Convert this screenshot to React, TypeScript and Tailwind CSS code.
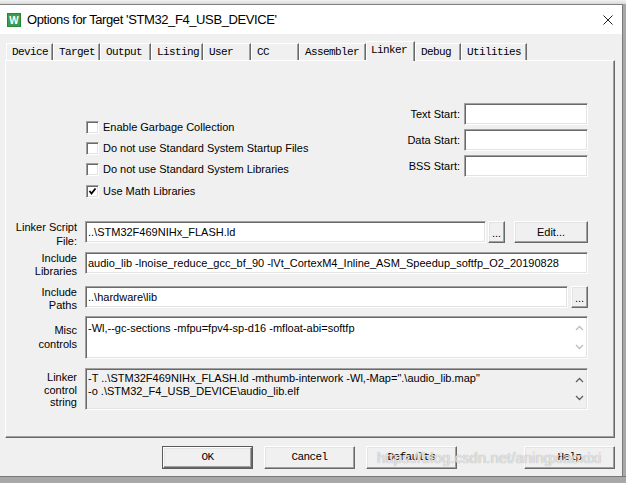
import React from "react";

const raised =
  "bg-[#f0f0f0] border border-t-white border-l-white border-r-[#696969] border-b-[#696969] shadow-[inset_-1px_-1px_0_#a0a0a0,inset_1px_1px_0_#e3e3e3]";
const sunken =
  "border border-t-[#a0a0a0] border-l-[#a0a0a0] border-r-white border-b-white shadow-[inset_1px_1px_0_#696969,inset_-1px_-1px_0_#e3e3e3]";

const tabs = [
  { label: "Device", w: "w-[47px]" },
  { label: "Target", w: "w-[47px]" },
  { label: "Output", w: "w-[51px]" },
  { label: "Listing", w: "w-[52px]" },
  { label: "User", w: "w-[48px]" },
  { label: "CC", w: "w-[48px]" },
  { label: "Assembler", w: "w-[67px]" },
  { label: "Linker", w: "w-[49px]", active: true },
  { label: "Debug", w: "w-[46px]" },
  { label: "Utilities", w: "w-[66px]" },
];

function Chevron({ up, color }: { up?: boolean; color: string }) {
  return (
    <svg width="9" height="6" viewBox="0 0 9 6">
      <polyline
        points={up ? "1,5 4.5,1.5 8,5" : "1,1 4.5,4.5 8,1"}
        fill="none"
        stroke={color}
        strokeWidth="1.3"
      />
    </svg>
  );
}

function CheckRow({ label, checked }: { label: string; checked?: boolean }) {
  return (
    <div className="flex h-[21px] items-center gap-[4px]">
      <div className={`h-[13px] w-[13px] bg-white ${sunken} flex items-center justify-center`}>
        {checked && (
          <svg width="9" height="9" viewBox="0 0 9 9">
            <polyline points="1.5,4 3.5,6.5 7.5,1.5" fill="none" stroke="#000" strokeWidth="1.8" />
          </svg>
        )}
      </div>
      <span>{label}</span>
    </div>
  );
}

function Field({ label }: { label: string }) {
  return (
    <div className="flex h-[22px] items-center gap-[4px]">
      <span className="text-right">{label}</span>
      <div className={`h-[22px] w-[124px] bg-white ${sunken}`} />
    </div>
  );
}

function Label({ children, className = "" }: { children: React.ReactNode; className?: string }) {
  return <div className={`w-[71px] shrink-0 text-right ${className}`}>{children}</div>;
}

export default function App() {
  return (
    <div className="relative flex h-[483px] w-[626px] flex-col overflow-hidden bg-[#f0f0f0] font-['Liberation_Sans',Arial,sans-serif] text-[11px] text-black">
      <div className="h-[4px] bg-gradient-to-b from-[#f2f2f2] to-[#d9d9d9]" />
      <div className="flex flex-1">
        <div className="flex flex-1 flex-col">
          {/* title bar */}
          <div className="flex h-[30px] items-center border-t border-[#808080] bg-white">
            <svg width="14" height="14" viewBox="0 0 14 14" className="ml-[7px]">
              <rect width="14" height="14" fill="#23863a" />
              <rect x="1" y="1" width="12" height="12" fill="#3a9c4c" />
              <text x="7" y="10.5" textAnchor="middle" fontSize="10" fontWeight="bold" fill="#fff" fontFamily="Liberation Sans">
                W
              </text>
            </svg>
            <span className="ml-[6px] text-[13px] tracking-[-0.4px] text-black">
              Options for Target 'STM32_F4_USB_DEVICE'
            </span>
            <svg width="10" height="10" viewBox="0 0 10 10" className="ml-auto mr-[9px]">
              <path d="M0.5 0.5 L9.5 9.5 M9.5 0.5 L0.5 9.5" stroke="#222" strokeWidth="1" />
            </svg>
          </div>

          {/* body */}
          <div className="flex flex-1 flex-col pl-[5px] pt-[7px]">
            {/* tabs */}
            <div className="flex h-[19px] items-end pl-[1px] font-['Liberation_Mono',monospace] text-[11px] tracking-[-0.6px]">
              {tabs.map((t) =>
                t.active ? (
                  <div
                    key={t.label}
                    className={`${t.w} relative z-10 -mb-[1px] h-[20px] border-l border-t border-l-white border-t-white border-r border-r-[#696969] bg-[#f0f0f0] pl-[4px] pt-[2px] leading-[13px] shadow-[inset_-1px_0_0_#a0a0a0]`}
                  >
                    {t.label}
                  </div>
                ) : (
                  <div
                    key={t.label}
                    className={`${t.w} h-[17px] border-l border-t border-l-white border-t-white border-r border-r-[#696969] pl-[5px] pt-[2px] leading-[13px] shadow-[inset_-1px_0_0_#a0a0a0]`}
                  >
                    {t.label}
                  </div>
                )
              )}
            </div>

            {/* panel */}
            <div className="flex h-[378px] w-[610px] flex-col border border-t-white border-l-white border-r-[#696969] border-b-[#696969] shadow-[inset_-1px_-1px_0_#a0a0a0]">
              <div className="flex h-[160px] pr-[26px]">
                <div className="pl-[80px] pt-[56px]">
                  <CheckRow label="Enable Garbage Collection" />
                  <CheckRow label="Do not use Standard System Startup Files" />
                  <CheckRow label="Do not use Standard System Libraries" />
                  <div className="mt-[1px]">
                    <CheckRow label="Use Math Libraries" checked />
                  </div>
                </div>
                <div className="ml-auto flex flex-col items-end gap-[4px] pt-[42px]">
                  <Field label="Text Start:" />
                  <Field label="Data Start:" />
                  <Field label="BSS Start:" />
                </div>
              </div>

              <div className="flex flex-col pr-[26px]">
                {/* Linker Script File */}
                <div className="flex h-[22px] gap-[8px]">
                  <Label className="-mt-[1px] leading-[14px]">
                    Linker Script
                    <br />
                    File:
                  </Label>
                  <div className="flex flex-1 items-center">
                    <div className={`flex h-[22px] flex-1 items-center bg-white pl-[2px] ${sunken}`}>..\STM32F469NIHx_FLASH.ld</div>
                    <div className={`ml-[2px] flex h-[22px] w-[17px] items-end justify-center pb-[3px] leading-none ${raised}`}>...</div>
                    <div className={`ml-[9px] flex h-[22px] w-[74px] items-center justify-center ${raised}`}>Edit...</div>
                  </div>
                </div>

                {/* Include Libraries */}
                <div className="mt-[9px] flex h-[22px] gap-[8px]">
                  <Label className="leading-[13px]">
                    Include
                    <br />
                    Libraries
                  </Label>
                  <div className={`flex h-[22px] flex-1 items-center bg-white pl-[2px] ${sunken}`}>
                    audio_lib -lnoise_reduce_gcc_bf_90 -lVt_CortexM4_Inline_ASM_Speedup_softfp_O2_20190828
                  </div>
                </div>

                {/* Include Paths */}
                <div className="mt-[12px] flex h-[22px] gap-[8px]">
                  <Label className="leading-[13px]">
                    Include
                    <br />
                    Paths
                  </Label>
                  <div className="flex flex-1 items-center">
                    <div className={`flex h-[22px] flex-1 items-center bg-white pl-[2px] ${sunken}`}>..\hardware\lib</div>
                    <div className={`ml-[3px] flex h-[22px] w-[17px] items-end justify-center pb-[3px] leading-none ${raised}`}>...</div>
                  </div>
                </div>

                {/* Misc controls */}
                <div className="mt-[8px] flex h-[43px] gap-[8px]">
                  <Label className="pt-[7px] leading-[14px]">
                    Misc
                    <br />
                    controls
                  </Label>
                  <div className={`flex h-[43px] flex-1 bg-white ${sunken}`}>
                    <div className="flex-1 pl-[2px] pt-[4px] leading-[14px]">
                      -Wl,--gc-sections -mfpu=fpv4-sp-d16 -mfloat-abi=softfp
                    </div>
                    <div className="flex w-[15px] flex-col items-center justify-between py-[8px]">
                      <Chevron up color="#bdbdbd" />
                      <Chevron color="#bdbdbd" />
                    </div>
                  </div>
                </div>

                {/* Linker control string */}
                <div className="mt-[9px] flex h-[42px] gap-[8px]">
                  <Label className="pt-[3px] leading-[12.5px]">
                    Linker
                    <br />
                    control
                    <br />
                    string
                  </Label>
                  <div className={`flex h-[42px] flex-1 bg-[#f0f0f0] ${sunken}`}>
                    <div className="flex-1 pl-[2px] pt-[3px] leading-[13px]">
                      -T ..\STM32F469NIHx_FLASH.ld -mthumb-interwork -Wl,-Map=".\audio_lib.map"
                      <br />
                      -o .\STM32_F4_USB_DEVICE\audio_lib.elf
                    </div>
                    <div className="flex w-[15px] flex-col items-center justify-between py-[8px]">
                      <Chevron up color="#606060" />
                      <Chevron color="#606060" />
                    </div>
                  </div>
                </div>
              </div>
            </div>

            {/* buttons */}
            <div className="mt-[8px] flex h-[23px] pl-[157px] font-['Liberation_Mono',monospace] text-[11px] tracking-[-0.6px]">
              <div className="h-[23px] w-[91px] border border-[#5a5a5a]">
                <div className={`flex h-full w-full items-center justify-center ${raised}`}>OK</div>
              </div>
              <div className={`ml-[11px] flex h-[23px] w-[91px] items-center justify-center ${raised}`}>Cancel</div>
              <div className={`ml-[11px] flex h-[23px] w-[91px] items-center justify-center ${raised}`}>Defaults</div>
              <div className={`ml-[67px] flex h-[23px] w-[91px] items-center justify-center ${raised}`}>Help</div>
            </div>
          </div>
        </div>
        <div className="w-[4px] border-l border-[#7a7a7a] bg-[#a8a8a8]" />
      </div>
      <div className="h-[7px] border-t border-[#7a7a7a] bg-[#a8a8a8]" />

      {/* watermark */}
      <div className="absolute left-[377px] top-[450px] text-[15px] leading-[15px] text-[#ffffffb8] [text-shadow:0_0_1px_#8a8a8a]">
        https://blog.csdn.net/aningxiaoxixi
      </div>
    </div>
  );
}
